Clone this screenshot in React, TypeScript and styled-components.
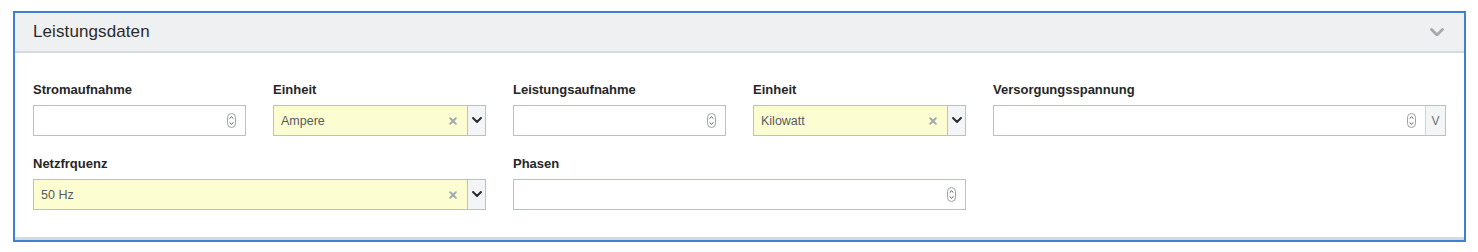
import React from "react";
import styled, { createGlobalStyle } from "styled-components";

const Global = createGlobalStyle`
  html, body { margin: 0; padding: 0; background: #ffffff; }
  body { font-family: "Liberation Sans", Arial, sans-serif; }
  * { box-sizing: border-box; }
`;

const Card = styled.section`
  width: 1453px;
  margin: 11px 0 0 13px;
  border: 2px solid #3f80d2;
  background: #ffffff;
`;

const Header = styled.header`
  height: 40px;
  display: flex;
  align-items: center;
  justify-content: space-between;
  padding: 0 20px 0 18px;
  background: #eff0f2;
  border-bottom: 2px solid #d3d9e0;
`;

const Title = styled.h2`
  margin: 0;
  font-size: 17px;
  font-weight: 400;
  color: #2b2b2b;
  letter-spacing: 0.1px;
`;

const Body = styled.div`
  padding: 29px 18px 27px;
  border-bottom: 3px solid #d3d9e0;
  display: grid;
  grid-template-columns: repeat(6, 213px);
  column-gap: 27px;
  row-gap: 20px;
`;

const Field = styled.div<{ $span?: number; $start?: number }>`
  display: flex;
  flex-direction: column;
  grid-column: ${(p) => (p.$start ? `${p.$start} / span ${p.$span ?? 1}` : `span ${p.$span ?? 1}`)};
`;

const Label = styled.label`
  font-size: 13px;
  line-height: 16px;
  font-weight: 700;
  color: #262626;
  margin-bottom: 7px;
`;

const Box = styled.div`
  height: 31px;
  display: flex;
  border: 1px solid #b7c1cc;
  background: #ffffff;
`;

const NumberArea = styled.div`
  flex: 1;
  display: flex;
  align-items: center;
  justify-content: flex-end;
  padding-right: 9px;
`;

const SelectArea = styled.div`
  flex: 1;
  display: flex;
  align-items: center;
  justify-content: space-between;
  padding: 0 10px 0 7px;
  background: #fdfdd2;
  font-size: 12.5px;
  color: #555b61;
`;

const DropButton = styled.div`
  width: 18px;
  display: flex;
  align-items: center;
  justify-content: center;
  border-left: 1px solid #b7c1cc;
  background: #f4f5f6;
`;

const Addon = styled.div`
  width: 20px;
  display: flex;
  align-items: center;
  justify-content: center;
  border-left: 1px solid #cdd4dc;
  background: #f4f5f6;
  font-size: 12px;
  color: #6d7379;
`;

const Spinner = () => (
  <svg width="9" height="15" viewBox="0 0 9 15">
    <rect x="0.5" y="0.5" width="8" height="14" rx="4" fill="#fff" stroke="#9aa1a8" />
    <path d="M2.6 5.6 L4.5 3.8 L6.4 5.6" fill="none" stroke="#555" strokeWidth="1" />
    <path d="M2.6 9.4 L4.5 11.2 L6.4 9.4" fill="none" stroke="#555" strokeWidth="1" />
  </svg>
);

const ClearIcon = () => (
  <svg width="8" height="8" viewBox="0 0 8 8">
    <path d="M1.2 1.2 L6.8 6.8 M6.8 1.2 L1.2 6.8" stroke="#a4abb2" strokeWidth="2" strokeLinecap="round" />
  </svg>
);

const Chevron = ({ color = "#2a2e33", w = 10, sw = 2.3 }: { color?: string; w?: number; sw?: number }) => (
  <svg width={w} height={w * 0.64} viewBox="0 0 11 7">
    <path d="M1.2 1.2 L5.5 5.4 L9.8 1.2" fill="none" stroke={color} strokeWidth={sw} strokeLinecap="round" strokeLinejoin="round" />
  </svg>
);

const NumberInput = ({ unit }: { unit?: string }) => (
  <Box>
    <NumberArea>
      <Spinner />
    </NumberArea>
    {unit && <Addon>{unit}</Addon>}
  </Box>
);

const Select = ({ value }: { value: string }) => (
  <Box>
    <SelectArea>
      <span>{value}</span>
      <ClearIcon />
    </SelectArea>
    <DropButton>
      <Chevron />
    </DropButton>
  </Box>
);

export default function App() {
  return (
    <>
      <Global />
      <Card>
        <Header>
          <Title>Leistungsdaten</Title>
          <Chevron color="#a3a8ad" w={14} sw={2.2} />
        </Header>
        <Body>
          <Field>
            <Label>Stromaufnahme</Label>
            <NumberInput />
          </Field>
          <Field>
            <Label>Einheit</Label>
            <Select value="Ampere" />
          </Field>
          <Field>
            <Label>Leistungsaufnahme</Label>
            <NumberInput />
          </Field>
          <Field>
            <Label>Einheit</Label>
            <Select value="Kilowatt" />
          </Field>
          <Field $span={2}>
            <Label>Versorgungsspannung</Label>
            <NumberInput unit="V" />
          </Field>
          <Field $span={2} $start={1}>
            <Label>Netzfrquenz</Label>
            <Select value="50 Hz" />
          </Field>
          <Field $span={2}>
            <Label>Phasen</Label>
            <NumberInput />
          </Field>
        </Body>
      </Card>
    </>
  );
}
